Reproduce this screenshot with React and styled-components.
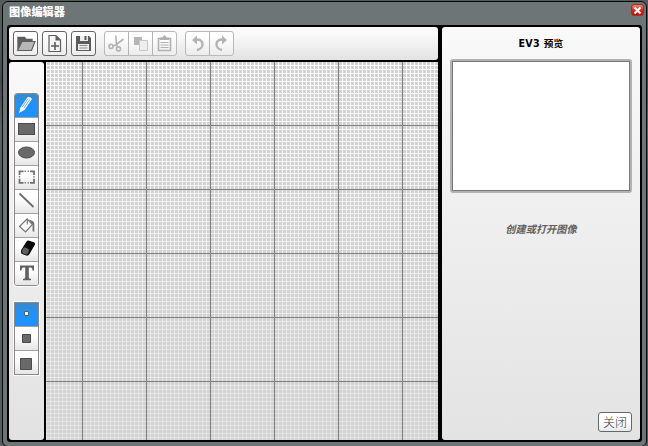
import React from "react";
import styled, { createGlobalStyle, css } from "styled-components";

const Global = createGlobalStyle`
  * { box-sizing: border-box; }
  body { margin: 0; overflow: hidden; background: #60676a; font-family: "DejaVu Sans", "Noto Sans CJK SC", sans-serif; }
`;

const Backdrop = styled.div`
  width: 648px;
  height: 446px;
  padding: 1px 1px 0 2px;
  overflow: hidden;
  background: linear-gradient(#555c58 0, #555b5d 30px, #434950 80px, #5c6265 130px, #50575a 200px, #575d60 446px);
`;

const Dialog = styled.div`
  height: 446px;
  padding: 0 4px;
  border: 1px solid #080909;
  border-radius: 6px;
  background: #6e7577;
`;

const TitleBar = styled.header`
  height: 23px;
  display: flex;
  justify-content: space-between;
  align-items: flex-start;
  padding: 2px 0 0 2px;
`;

const Title = styled.h1`
  margin: 0;
  color: #fff;
  font: 900 11.2px/14px "Noto Sans CJK SC", sans-serif;
`;

const CloseIcon = styled.button`
  width: 13px;
  height: 12px;
  margin: 0 -2px 0 0;
  padding: 0;
  display: grid;
  place-items: center;
  border: 1px solid #a92a25;
  border-radius: 3px;
  background: linear-gradient(#df8a80, #d52d20 50%, #b80e05);
`;

const Workspace = styled.main`
  display: flex;
  gap: 4px;
  width: 635px;
  height: 417px;
  padding: 2px;
  border-radius: 3px;
  background: #000;
`;

const Editor = styled.section`
  width: 429px;
  display: flex;
  flex-direction: column;
  gap: 2px;
`;

const Toolbar = styled.div`
  height: 33px;
  display: flex;
  padding: 4px;
  border-radius: 3px;
  background: linear-gradient(#fafafa 20%, #e3e3e3);
`;

const Body = styled.div`
  height: 378px;
  display: flex;
  gap: 2px;
`;

const ToolGroup = styled.div`
  display: flex;
  height: 25px;
  margin-right: ${(p) => p.$gap}px;
  border: 1px solid ${(p) => (p.$muted ? "#b9b9b9" : "#666")};
  border-radius: 3px;
  background: linear-gradient(#fff 20%, #ececec);
`;

const ToolButton = styled.button`
  width: 23px;
  height: 23px;
  padding: 0;
  border: 0;
  background: none;
  & + & { width: 24px; border-left: 1px solid #b3b3b3; }
  svg { display: block; }
`;

const Palette = styled.aside`
  width: 35px;
  padding: 31px 5px 0;
  border-radius: 3px;
  background: linear-gradient(#f9f9f9, #e2e2e2);
`;

const Stack = styled.div`
  width: 25px;
  margin-bottom: ${(p) => p.$gap || 0}px;
  border: 1px solid #898989;
  border-radius: ${(p) => p.$radius}px;
  box-shadow: 0 0 0 1px #fbfbfb;
  overflow: hidden;
  background: #fff;
`;

const StackButton = styled.button`
  display: block;
  width: 23px;
  height: 23px;
  padding: 0;
  border: 0;
  background: linear-gradient(#fff 35%, #e6e6e6);
  & + & { height: 24px; border-top: 1px solid #a2a2a2; }
  ${(p) => p.$active && css`background: linear-gradient(#3b89c9, #1f91fb 50%);`}
  svg { display: block; }
`;

const Canvas = styled.div`
  width: 392px;
  background:
    linear-gradient(90deg, #808080 1px, transparent 1px) 36px 0 / 64px 64px,
    linear-gradient(#808080 1px, transparent 1px) 0 63px / 64px 64px,
    conic-gradient(from 90deg at 1px 1px, #d2d2d2 90deg, transparent 0) 0 3px / 4px 4px,
    linear-gradient(#fbfbfb, #e4e4e4);
`;

const Preview = styled.section`
  width: 198px;
  display: flex;
  flex-direction: column;
  align-items: center;
  padding: 9px 8px 8px;
  border-radius: 3px;
  background: linear-gradient(#f9f9f9, #e3e3e3);
`;

const PreviewTitle = styled.h2`
  margin: 0;
  height: 15px;
  color: #000;
  font: 700 9.6px/15px "DejaVu Sans", "Noto Sans CJK SC", sans-serif;
  letter-spacing: .3px;
  white-space: pre;
`;

const PreviewFrame = styled.div`
  width: 182px;
  height: 134px;
  margin-top: 8px;
  padding: 2px;
  border-radius: 3px;
  background: #b2b2b2;
`;

const PreviewScreen = styled.div`
  height: 130px;
  border: 1px solid #777;
  background: #fff;
`;

const Hint = styled.p`
  margin: 28px 0 0;
  color: #62625f;
  font: italic 700 10.2px/16px "Noto Sans CJK SC", sans-serif;
`;

const CloseButton = styled.button`
  align-self: flex-end;
  width: 34px;
  height: 20px;
  margin-top: auto;
  padding: 0;
  border: 1px solid #5f6870;
  border-radius: 3px;
  background: linear-gradient(#fff 45%, #e9e9e9);
  color: #333;
  font: 300 12px/18px "Noto Sans CJK SC", sans-serif;
`;

const Icon = ({ children }) => (
  <svg width="23" height="23" viewBox="0 0 23 23" fill="none">{children}</svg>
);

const Cut = () => (
  <Icon>
    <g stroke="#b3b3b3" strokeWidth="1.6">
      <path d="M10.8 3.5l.6 9L13 15.5M18.5 7l-7 5.5-3.5 1.7" />
      <circle cx="6" cy="14.4" r="2" /><circle cx="13.5" cy="16.9" r="2" />
    </g>
  </Icon>
);

const fileTools = [
  <Icon>
    <path d="M4 17V5.5h6.5l1.5 2h6V10" fill="#5e5e5e" stroke="#5e5e5e" strokeWidth="1.4" />
    <path d="M3.5 18.5L8 9.5H21l-3.5 9z" fill="#b6b6b6" stroke="#5e5e5e" strokeWidth="1.2" />
  </Icon>,
  <Icon>
    <path d="M6 3.5h7l4.5 4.5v11.5H6z" fill="#f5f5f5" stroke="#5e5e5e" strokeWidth="1.2" />
    <path d="M12.5 3.5V8.5h5z" fill="#5e5e5e" />
    <path d="M12 10v8M8 14h8" stroke="#5e5e5e" strokeWidth="1.6" />
  </Icon>,
  <Icon>
    <path d="M4 4h13l2 2v13H4z" fill="#5b5b5b" />
    <path d="M8 4h8v5H8z" fill="#eee" /><path d="M12.5 4h2v4h-2z" fill="#5b5b5b" />
    <path d="M6 12h11v6H6z" fill="#eee" />
    <path d="M7.5 13.5h8M7.5 16h8" stroke="#888" />
  </Icon>,
];

const drawTools = [
  <Icon>
    <path d="M4 19l1.3-5.3L12.5 3.2q3-.8 4.5 1.9L9.5 16z" fill="#fff" />
    <path d="M7.2 13.2L13 4.6M8.8 14.2l6-8.8" stroke="#268ee9" strokeWidth=".7" />
  </Icon>,
  <Icon><rect x="3.5" y="5.5" width="16" height="11" fill="#696969" stroke="#4c4c4c" /></Icon>,
  <Icon><ellipse cx="11.5" cy="10.5" rx="8" ry="5.5" fill="#696969" stroke="#4c4c4c" /></Icon>,
  <Icon>
    <path d="M4.5 9V5.3h4M15 5.3h4V9M19 12.8v4h-4M8.5 16.8h-4v-4" stroke="#707070" strokeWidth="1.8" />
    <path d="M9.5 5.3H11M12.5 5.3H14M9.5 16.8H11M12.5 16.8H14M4.5 10v1.5M19 10v1.5" stroke="#808080" strokeWidth="1.4" />
  </Icon>,
  <Icon><path d="M4.5 3.5l14 13.5" stroke="#6c6c6c" strokeWidth="1.8" /></Icon>,
  <Icon>
    <path d="M4.5 12.5l7.5-7.5 5.5 5.5-7 7.5zM12.3 10.5V4.2" stroke="#737373" strokeWidth="1.1" />
    <path d="M13.5 5.5q5.5 1 5.8 4v8.5l-1.8-1v-6.5z" fill="#737373" />
  </Icon>,
  <Icon>
    <path d="M6.2 12L11.2 4q1-1.7 3-1.3l4.8 1.5q1.4.7 1 2.4L14.5 16q-1.4 2.1-3.2 1.6L7 16.1q-1.5-1-.8-4.1z" fill="#080808" />
    <path d="M7.2 12l1.8-2.8q3 .1 5.3 2.5l-1.3 3.5q-1 1.6-2.2 1.2l-3-1q-1.2-.8-.6-3.4z" fill="#5e5e5e" />
  </Icon>,
  <Icon>
    <path d="M5 3.5h14v5h-1.4q-.2-3-1.8-3h-2V15.5q0 1.4 2.2 1.4v1.3H8v-1.3q2.2 0 2.2-1.4v-10h-2q-1.6 0-1.8 3H5z" fill="#606060" />
  </Icon>,
];

const sizes = [
  <Icon><path d="M9.5 8.5h4v4h-4z" fill="#fff" stroke="#4b6372" /></Icon>,
  <Icon><path d="M7.5 7.5h8v8h-8z" fill="#696969" stroke="#4b4b4b" /></Icon>,
  <Icon><path d="M5.5 7.5h11v11h-11z" fill="#696969" stroke="#4b4b4b" /></Icon>,
];

export default function App() {
  return (
    <Backdrop>
      <Global />
      <Dialog>
        <TitleBar>
          <Title>图像编辑器</Title>
          <CloseIcon aria-label="关闭窗口">
            <svg width="9" height="9" viewBox="0 0 9 9"><path d="M1.5 1.5l6 6M7.5 1.5l-6 6" stroke="#fff" strokeWidth="2" /></svg>
          </CloseIcon>
        </TitleBar>
        <Workspace>
          <Editor>
            <Toolbar>
              {fileTools.map((icon, i) => (
                <ToolGroup key={i} $gap={i === 2 ? 8 : 4}><ToolButton>{icon}</ToolButton></ToolGroup>
              ))}
              <ToolGroup $muted $gap={8}>
                <ToolButton><Cut /></ToolButton>
                <ToolButton>
                  <Icon><path d="M5 5h8v8H5z" fill="#b5b5b5" /><path d="M10.5 8.5h8v10h-8z" fill="#eee" stroke="#c6c6c6" /></Icon>
                </ToolButton>
                <ToolButton>
                  <Icon>
                    <path d="M5.5 6.5h12v12h-12z" stroke="#b1b1b1" strokeWidth="1.6" />
                    <path d="M7 8V5.5h2.5Q11.5 1 13.5 5.5H16V8z" fill="#b1b1b1" />
                    <path d="M7.5 10.5h8M7.5 13h8M7.5 15.5h8" stroke="#b1b1b1" />
                  </Icon>
                </ToolButton>
              </ToolGroup>
              <ToolGroup $muted $gap={0}>
                <ToolButton>
                  <Icon><path d="M10 7.5c8-1 9 9 1 10.5" stroke="#b4b4b4" strokeWidth="2.4" /><path d="M6 8l5-4.5v9z" fill="#b4b4b4" /></Icon>
                </ToolButton>
                <ToolButton>
                  <Icon><path d="M13 7.5c-8-1-9 9-1 10.5" stroke="#b4b4b4" strokeWidth="2.4" /><path d="M17 8l-5-4.5v9z" fill="#b4b4b4" /></Icon>
                </ToolButton>
              </ToolGroup>
            </Toolbar>
            <Body>
              <Palette>
                <Stack $gap={16} $radius={3}>
                  {drawTools.map((icon, i) => <StackButton key={i} $active={i === 0}>{icon}</StackButton>)}
                </Stack>
                <Stack $radius={0}>
                  {sizes.map((icon, i) => <StackButton key={i} $active={i === 0}>{icon}</StackButton>)}
                </Stack>
              </Palette>
              <Canvas />
            </Body>
          </Editor>
          <Preview>
            <PreviewTitle>EV3 预览</PreviewTitle>
            <PreviewFrame><PreviewScreen /></PreviewFrame>
            <Hint>创建或打开图像</Hint>
            <CloseButton>关闭</CloseButton>
          </Preview>
        </Workspace>
      </Dialog>
    </Backdrop>
  );
}
